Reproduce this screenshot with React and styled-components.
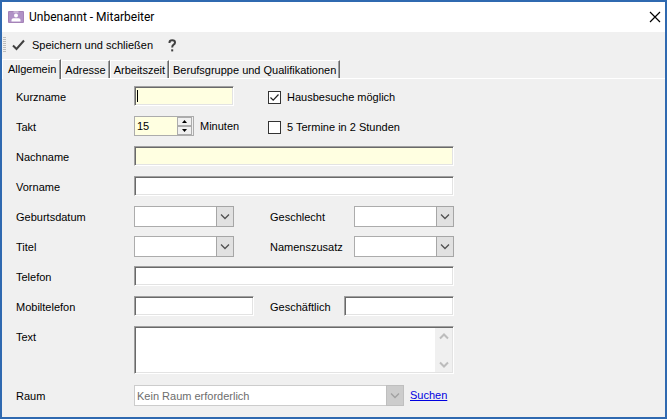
import React, { useState } from 'react'
import styled, { createGlobalStyle } from 'styled-components'

const GlobalStyle = createGlobalStyle`
  * {
    box-sizing: border-box;
  }

  body {
    margin: 0;
    background: #f0f0f0;
    color: #000;
    font-family: 'Liberation Sans', Arial, sans-serif;
    font-size: 11px;
  }

  button,
  input,
  select,
  textarea {
    margin: 0;
    padding: 0;
    border: 0;
    border-radius: 0;
    color: inherit;
    font: inherit;
    outline: none;
  }
`

const Window = styled.div`
  display: flex;
  flex-direction: column;
  min-height: 100vh;
  border: 2px solid #2f69b0;
  background: #f0f0f0;
`

const TitleBar = styled.header`
  display: flex;
  align-items: center;
  height: 30px;
  padding: 0 4px 0 6px;
  background: #fff;
`

const Title = styled.h1`
  flex: 1;
  margin: 0 0 0 5px;
  font-family: Roboto, sans-serif;
  font-size: 12px;
  font-weight: 400;
  line-height: 20px;
`

const IconButton = styled.button`
  display: flex;
  align-items: center;
  background: none;
`

const Toolbar = styled.div`
  display: flex;
  align-items: center;
  height: 26px;
  padding-left: 1px;
`

const Grip = styled.span`
  width: 3px;
  height: 16px;
  margin-right: 6px;
  background: repeating-linear-gradient(#bcbcbc 0 1px, #f0f0f0 1px 2px);
`

const ToolButton = styled(IconButton)`
  gap: 7px;
  margin-right: 15px;
  white-space: nowrap;
`

const Tabs = styled.div`
  display: flex;
  align-items: flex-end;
  height: 21px;
  border-bottom: 1px solid #fff;
`

const Tab = styled.button`
  height: ${({ $active }) => ($active ? '20px' : '18px')};
  margin-bottom: ${({ $active }) => ($active ? '-1px' : '0')};
  padding: ${({ $active }) => ($active ? '0 4px 2px 5px' : '0 3px')};
  border-top: 1px solid #fff;
  border-right: 1px solid #696969;
  border-left: 1px solid #fff;
  background: #f0f0f0;
  box-shadow: inset -1px 0 #a0a0a0;
  line-height: 16px;
  white-space: nowrap;
`

const Form = styled.form`
  display: flex;
  flex-direction: column;
  padding: 7px 14px 0;
`

const Row = styled.div`
  display: flex;
  align-items: flex-start;
  min-height: ${({ $tall }) => ($tall ? '59px' : '30px')};
`

const Label = styled.label`
  flex: none;
  width: 118px;
  line-height: 22px;
`

const Fields = styled.div`
  display: flex;
  justify-content: space-between;
  width: 320px;
`

const Side = styled.div`
  display: flex;
  justify-content: space-between;
  width: 184px;
`

const SideLabel = styled.label`
  line-height: 22px;
`

const sunken = `
  border: 1px solid;
  border-color: #a0a0a0 #fff #fff #a0a0a0;
  box-shadow: inset 1px 1px #696969, inset -1px -1px #e3e3e3;
`

const TextBox = styled.input`
  ${sunken}
  width: ${({ $width }) => $width || '100%'};
  height: 20px;
  padding: 0 4px;
  background: ${({ $required }) => ($required ? '#ffffe1' : '#fff')};
`

const CaretBox = styled.div`
  position: relative;
  width: 100px;

  input {
    caret-color: transparent;
  }
`

const Caret = styled.span`
  position: absolute;
  top: 4px;
  left: 3px;
  width: 1px;
  height: 12px;
  background: #000;
`

const CheckLabel = styled.label`
  display: flex;
  align-items: center;
  gap: 6px;
  width: 186px;
  height: 22px;
`

const CheckBox = styled.input`
  appearance: none;
  width: 13px;
  height: 13px;
  border: 1px solid #333;
  background: #fff;

  &:checked {
    background: #fff
      url("data:image/svg+xml,%3Csvg xmlns='http://www.w3.org/2000/svg' viewBox='0 0 11 11'%3E%3Cpath d='M1.5 5.5l2.7 2.7 5.3-5.7' fill='none' stroke='%23222' stroke-width='1.2'/%3E%3C/svg%3E");
  }
`

const SpinGroup = styled.div`
  display: flex;
  align-items: center;
  gap: 6px;
  height: 20px;
  line-height: 22px;
`

const SpinBox = styled.div`
  display: flex;
  width: 60px;
  height: 20px;
  padding-right: 1px;
  border: 1px solid #acacac;
  background: #f0f0f0;
`

const SpinInput = styled.input`
  appearance: textfield;
  width: 42px;
  padding-left: 2px;
  background: #ffffe1;

  &::-webkit-inner-spin-button {
    appearance: none;
  }
`

const SpinButtons = styled.div`
  display: flex;
  flex: 1;
  flex-direction: column;
`

const SpinButton = styled.button`
  display: flex;
  flex: 1;
  align-items: center;
  justify-content: center;
  border: 1px solid #acacac;
  background: #f0f0f0;
`

const SelectFrame = styled.div`
  display: flex;
  position: relative;
  width: ${({ $width }) => $width || '100px'};
  height: 21px;
  color: ${({ $disabled }) => ($disabled ? '#6d6d6d' : '#000')};

  select {
    appearance: none;
    width: 100%;
    padding: 0 20px 0 2px;
    border: 1px solid ${({ $disabled }) => ($disabled ? '#ccc' : '#acacac')};
    background: #fff;
    opacity: 1;
  }
`

const SelectArrow = styled.span`
  display: flex;
  position: absolute;
  top: 0;
  right: 0;
  align-items: center;
  justify-content: center;
  width: 18px;
  height: 21px;
  border: 1px solid ${({ $disabled }) => ($disabled ? '#bfbfbf' : '#a6a6a6')};
  background: ${({ $disabled }) => ($disabled ? '#ccc' : '#e1e1e1')};
  color: ${({ $disabled }) => ($disabled ? '#a0a0a0' : '#505050')};
  pointer-events: none;
`

const MemoFrame = styled.div`
  ${sunken}
  display: flex;
  width: 320px;
  height: 48px;
  padding: 1px;
  background: #fff;
`

const Memo = styled.textarea`
  flex: 1;
  background: #fff;
  resize: none;
`

const ScrollBar = styled.div`
  display: flex;
  flex-direction: column;
  align-items: center;
  justify-content: space-between;
  width: 17px;
  padding: 5px 0 4px;
  background: #f0f0f0;
  color: #bcbcbc;
`

const SearchLink = styled.a`
  margin-left: 6px;
  color: #0000e0;
  line-height: 20px;
`

function Chevron({ up, bold }) {
  return (
    <svg width="10" height="7" viewBox="0 0 10 7" fill="none" stroke="currentColor" strokeWidth={bold ? 2 : 1.3}>
      <path d={up ? 'M1 5.5L5 1.5L9 5.5' : 'M1 1.5L5 5.5L9 1.5'} />
    </svg>
  )
}

function DropDown({ id, width, disabled, children }) {
  return (
    <SelectFrame $width={width} $disabled={disabled}>
      <select id={id} disabled={disabled}>
        {children || <option value="" />}
      </select>
      <SelectArrow $disabled={disabled}>
        <Chevron />
      </SelectArrow>
    </SelectFrame>
  )
}

function EmployeeIcon() {
  return (
    <svg width="16" height="12" viewBox="0 0 16 12">
      <rect width="16" height="12" rx="1" fill="#a583b8" />
      <rect x="1" y="1" width="14" height="10" fill="#b092c6" />
      <path d="M5.5 1h5" stroke="#e6dcec" />
      <circle cx="8" cy="4.4" r="2" fill="#fff" />
      <path d="M3.5 10.5V8.9Q3.5 7.2 5.4 7.2H10.6Q12.5 7.2 12.5 8.9V10.5Z" fill="#fff" />
    </svg>
  )
}

const TABS = ['Allgemein', 'Adresse', 'Arbeitszeit', 'Berufsgruppe und Qualifikationen']

export default function App() {
  const [tab, setTab] = useState(TABS[0])
  const [shortName, setShortName] = useState('')
  const [interval, setInterval] = useState(15)

  return (
    <Window>
      <GlobalStyle />
      <TitleBar>
        <EmployeeIcon />
        <Title>Unbenannt - Mitarbeiter</Title>
        <IconButton type="button" aria-label="Schließen">
          <svg width="12" height="12" viewBox="0 0 12 12" stroke="#000" strokeWidth="1.2">
            <path d="M1 1L11 11M11 1L1 11" />
          </svg>
        </IconButton>
      </TitleBar>
      <Toolbar>
        <Grip />
        <ToolButton type="button">
          <svg width="13" height="12" viewBox="0 0 13 12" fill="none" stroke="#404040" strokeWidth="2">
            <path d="M1 6.5L4.5 10L12 1.5" />
          </svg>
          Speichern und schließen
        </ToolButton>
        <ToolButton type="button" aria-label="Hilfe">
          <svg width="9" height="13" viewBox="0 0 9 13" fill="none" stroke="#404040" strokeWidth="2">
            <path d="M1.5 4V3.4Q1.5 1.2 4.2 1.2Q7 1.2 7 3.5Q7 4.8 5.6 5.7Q4.2 6.6 4.2 8.6" />
            <path d="M4.2 10.3V12.4" />
          </svg>
        </ToolButton>
      </Toolbar>
      <Tabs role="tablist">
        {TABS.map(name => (
          <Tab key={name} role="tab" aria-selected={name === tab} $active={name === tab} onClick={() => setTab(name)}>
            {name}
          </Tab>
        ))}
      </Tabs>
      <Form onSubmit={e => e.preventDefault()}>
        <Row>
          <Label htmlFor="kurzname">Kurzname</Label>
          <Fields>
            <CaretBox>
              <TextBox id="kurzname" $required value={shortName} onChange={e => setShortName(e.target.value)} />
              {shortName === '' && <Caret />}
            </CaretBox>
            <CheckLabel>
              <CheckBox type="checkbox" defaultChecked />
              Hausbesuche möglich
            </CheckLabel>
          </Fields>
        </Row>
        <Row>
          <Label htmlFor="takt">Takt</Label>
          <Fields>
            <SpinGroup>
              <SpinBox>
                <SpinInput
                  id="takt"
                  type="number"
                  value={interval}
                  onChange={e => setInterval(Number(e.target.value))}
                />
                <SpinButtons>
                  <SpinButton type="button" aria-label="Mehr" onClick={() => setInterval(interval + 1)}>
                    <svg width="5" height="3" viewBox="0 0 5 3">
                      <path d="M0 3L2.5 0L5 3Z" />
                    </svg>
                  </SpinButton>
                  <SpinButton type="button" aria-label="Weniger" onClick={() => setInterval(interval - 1)}>
                    <svg width="5" height="3" viewBox="0 0 5 3">
                      <path d="M0 0L2.5 3L5 0Z" />
                    </svg>
                  </SpinButton>
                </SpinButtons>
              </SpinBox>
              <span>Minuten</span>
            </SpinGroup>
            <CheckLabel>
              <CheckBox type="checkbox" />5 Termine in 2 Stunden
            </CheckLabel>
          </Fields>
        </Row>
        <Row>
          <Label htmlFor="nachname">Nachname</Label>
          <Fields>
            <TextBox id="nachname" $required />
          </Fields>
        </Row>
        <Row>
          <Label htmlFor="vorname">Vorname</Label>
          <Fields>
            <TextBox id="vorname" />
          </Fields>
        </Row>
        <Row>
          <Label htmlFor="geburtsdatum">Geburtsdatum</Label>
          <Fields>
            <DropDown id="geburtsdatum" />
            <Side>
              <SideLabel htmlFor="geschlecht">Geschlecht</SideLabel>
              <DropDown id="geschlecht" />
            </Side>
          </Fields>
        </Row>
        <Row>
          <Label htmlFor="titel">Titel</Label>
          <Fields>
            <DropDown id="titel" />
            <Side>
              <SideLabel htmlFor="namenszusatz">Namenszusatz</SideLabel>
              <DropDown id="namenszusatz" />
            </Side>
          </Fields>
        </Row>
        <Row>
          <Label htmlFor="telefon">Telefon</Label>
          <Fields>
            <TextBox id="telefon" />
          </Fields>
        </Row>
        <Row>
          <Label htmlFor="mobiltelefon">Mobiltelefon</Label>
          <Fields>
            <TextBox id="mobiltelefon" $width="120px" />
            <Side>
              <SideLabel htmlFor="geschaeftlich">Geschäftlich</SideLabel>
              <TextBox id="geschaeftlich" $width="110px" />
            </Side>
          </Fields>
        </Row>
        <Row $tall>
          <Label htmlFor="text">Text</Label>
          <MemoFrame>
            <Memo id="text" />
            <ScrollBar aria-hidden="true">
              <Chevron up bold />
              <Chevron bold />
            </ScrollBar>
          </MemoFrame>
        </Row>
        <Row>
          <Label htmlFor="raum">Raum</Label>
          <DropDown id="raum" width="270px" disabled>
            <option>Kein Raum erforderlich</option>
          </DropDown>
          <SearchLink href="#raum">Suchen</SearchLink>
        </Row>
      </Form>
    </Window>
  )
}
